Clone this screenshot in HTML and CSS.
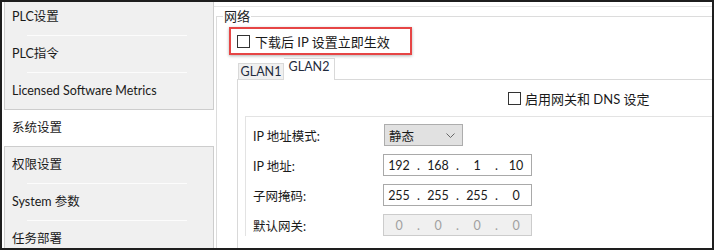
FILE: index.html
```html
<!DOCTYPE html>
<html lang="zh-CN">
<head>
  <meta charset="UTF-8" />
  <title>系统设置 - 网络</title>
  <link rel="stylesheet" href="styles.css">
</head>
<body>
  <div class="frame">
    <aside class="nav">
      <ul class="nav-group top">
        <li>PLC设置</li>
        <li>PLC指令</li>
        <li>Licensed Software Metrics</li>
      </ul>
      <div class="nav-item active">系统设置</div>
      <ul class="nav-group">
        <li>权限设置</li>
        <li>System 参数</li>
        <li>任务部署</li>
      </ul>
    </aside>

    <main class="panel">
      <fieldset class="net">
        <legend>网络</legend>
        <label class="apply-now"><span class="check"></span>下载后 IP 设置立即生效</label>

        <div class="tabs">
          <span class="tab">GLAN1</span>
          <span class="tab on">GLAN2</span>
        </div>
        <div class="pane">
          <label class="gw-toggle"><span class="check"></span>启用网关和 DNS 设定</label>
          <div class="ip-box">
            <div class="row">
              <span class="lbl">IP 地址模式:</span>
              <div class="select">静态
                <svg width="9" height="5" viewBox="0 0 9 5"><polyline points="0.5,0.5 4.5,4.5 8.5,0.5" fill="none" stroke="#666" stroke-width="1"/></svg>
              </div>
            </div>
            <div class="row">
              <span class="lbl">IP 地址:</span>
              <div class="ip"><span>192</span><i>.</i><span>168</span><i>.</i><span>1</span><i>.</i><span>10</span></div>
            </div>
            <div class="row">
              <span class="lbl">子网掩码:</span>
              <div class="ip"><span>255</span><i>.</i><span>255</span><i>.</i><span>255</span><i>.</i><span>0</span></div>
            </div>
            <div class="row">
              <span class="lbl">默认网关:</span>
              <div class="ip off"><span>0</span><i>.</i><span>0</span><i>.</i><span>0</span><i>.</i><span>0</span></div>
            </div>
          </div>
        </div>
      </fieldset>
    </main>
  </div>
</body>
</html>
```

FILE: styles.css
```css
body { margin:0; background:#fff; font-family:Lato, "Noto Sans CJK SC", sans-serif; font-size:12.5px; color:#1a1a1a; }
.frame { width:714px; height:250px; box-sizing:border-box; border:2px solid #1e1e1e; display:flex; overflow:hidden; }

/* left menu */
.nav { width:212px; flex:none; padding-left:2px; box-sizing:border-box; }
.nav-group { list-style:none; margin:0; padding:0; background:#f0f0f0; border:1px solid #cdcdcd; }
.nav-group.top { margin-top:-4px; }
.nav-group li { height:36px; line-height:35px; padding-left:7px; white-space:nowrap; }
.nav-group li + li { border-top:1px solid #f0f0f0; position:relative; }
.nav-group li + li::after { content:""; display:block; position:absolute; left:22px; right:26px; top:-1px; height:1px; background:#fcfcfc; }
.nav-item { height:36px; line-height:36px; padding-left:8px; background:#fff; }

/* right side */
.panel { flex:1; margin-top:4px; border-top:1px solid #e6e6e6; background:#fff; }
.net { margin:0 -20px 0 2px; padding:0; border:1px solid #dcdcdc; min-width:0; }
.net legend { margin-left:6px; padding:0 1px; line-height:18px; font-size:13px; color:#222; }

.apply-now { display:flex; align-items:center; gap:5px; width:183px; height:28px; box-sizing:border-box; margin:2px 0 0 12px; padding-left:6px; border:2px solid #e64545; box-shadow:0 1px 3px rgba(0,0,0,0.3); font-size:13px; }
.check { width:13px; height:13px; box-sizing:border-box; border:1px solid #333; background:#fff; flex:none; }

.tabs { display:flex; align-items:flex-end; margin:3px 0 0 21px; }
.tab { height:16px; line-height:16px; width:46px; box-sizing:border-box; text-align:center; background:#f0f0f0; border:1px solid #d9d9d9; border-bottom:none; color:#1f2b3d; }
.tab.on { width:51px; height:22px; line-height:16px; padding-bottom:4px; background:#fff; border-left:none; position:relative; margin-bottom:-1px; z-index:1; }

.pane { margin-left:20px; border-top:1px solid #d9d9d9; border-left:1px solid #d9d9d9; height:200px; }
.gw-toggle { display:flex; align-items:center; gap:4px; height:20px; margin-top:8px; padding-left:270px; white-space:nowrap; font-size:13px; }
.ip-box { margin:8px 0 0 7px; border-top:1px solid #e3e3e3; border-left:1px solid #e3e3e3; padding:7px 0 0 7px; display:flex; flex-direction:column; gap:8px; }
.row { display:flex; align-items:center; height:22px; }
.lbl { width:130px; flex:none; }
.select { margin-left:1px; width:79px; height:22px; box-sizing:border-box; display:flex; align-items:center; justify-content:space-between; padding:0 7px 0 4px; background:#e1e1e1; border:1px solid #adadad; }
.ip { width:149px; height:22px; box-sizing:border-box; border:1px solid #a9a9a9; background:#fff; display:grid; grid-template-columns:1fr 9px 1fr 9px 1fr 9px 1fr; align-items:center; text-align:center; }
.ip i { font-style:normal; }
.ip.off { background:#f0f0f0; border-color:#cccccc; color:#a0a0a0; }
```
